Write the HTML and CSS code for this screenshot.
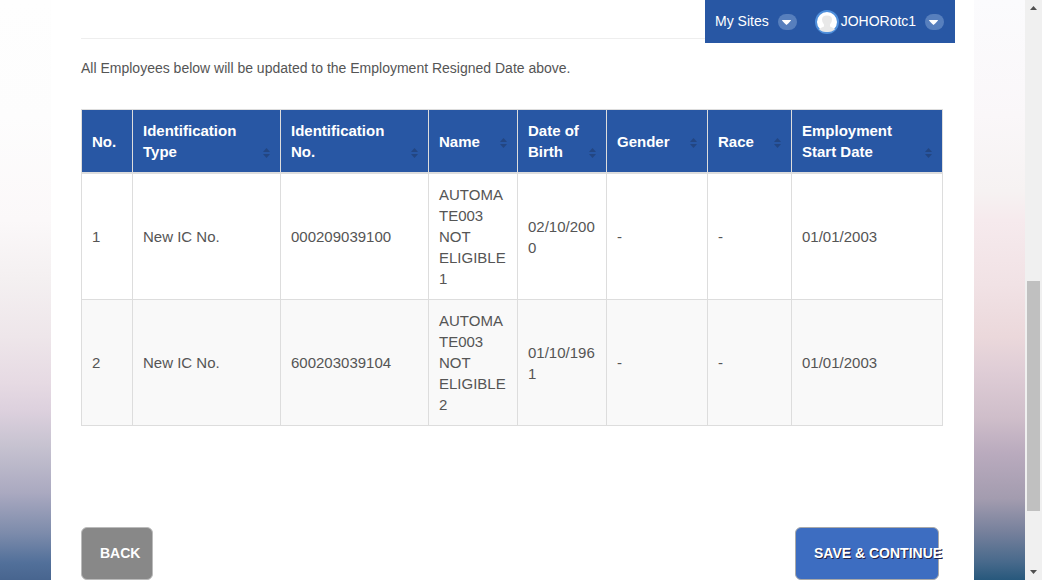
FILE: index.html
```html
<!DOCTYPE html>
<html lang="en">
<head>
<meta charset="utf-8">
<title>Employment Resigned Date</title>
<meta name="viewport" content="width=device-width, initial-scale=1">
<link rel="stylesheet" href="styles.css">
</head>
<body>
<svg class="symbols">
  <symbol id="sort" viewBox="0 0 7 10"><path d="M0 4h7L3.500 0zM0 6h7L3.500 10z"/></symbol>
  <symbol id="chevron" viewBox="0 0 19 16"><rect width="19" height="16" rx="8" fill="#577fbd"/><path d="M4 6h9q0 1-4.500 5Q4 7 4 6z" fill="#fff"/></symbol>
</svg>
<div class="page">
  <div class="backdrop backdrop-left"></div>
  <main class="panel">
    <nav class="topbar" aria-label="Account">
      <button class="menu" type="button">My Sites <svg class="chevron"><use href="#chevron"/></svg></button>
      <button class="menu" type="button">
        <svg class="avatar" viewBox="0 0 24 24"><circle cx="12" cy="12" r="11" fill="#fff" stroke="#4f8fdb" stroke-width="2"/><path d="M4 19.500q2-2 5-3v-2q-2-2-2-5 0-4 5-4t5 4q0 3-2 5v2q3 1 5 3-3 2.500-8 2.500t-8-2.500z" fill="#e8e8e8"/></svg>
        <span class="user">JOHORotc1</span> <svg class="chevron"><use href="#chevron"/></svg>
      </button>
    </nav>
    <hr class="rule">
    <p class="note">All Employees below will be updated to the Employment Resigned Date above.</p>
    <table class="employees">
      <colgroup>
        <col class="col-no"><col class="col-id"><col class="col-id"><col class="col-name"><col class="col-name"><col class="col-gender"><col class="col-race"><col class="col-start">
      </colgroup>
      <thead>
        <tr>
          <th scope="col">No.</th>
          <th scope="col"><button class="sorter" type="button">Identification Type<svg class="sort"><use href="#sort"/></svg></button></th>
          <th scope="col"><button class="sorter" type="button">Identification No.<svg class="sort"><use href="#sort"/></svg></button></th>
          <th scope="col"><button class="sorter" type="button">Name<svg class="sort"><use href="#sort"/></svg></button></th>
          <th scope="col"><button class="sorter" type="button">Date of Birth<svg class="sort"><use href="#sort"/></svg></button></th>
          <th scope="col"><button class="sorter" type="button">Gender<svg class="sort"><use href="#sort"/></svg></button></th>
          <th scope="col"><button class="sorter" type="button">Race<svg class="sort"><use href="#sort"/></svg></button></th>
          <th scope="col"><button class="sorter" type="button">Employment Start Date<svg class="sort"><use href="#sort"/></svg></button></th>
        </tr>
      </thead>
      <tbody>
        <tr><td>1</td><td>New IC No.</td><td>000209039100</td><td>AUTOMATE003 NOT ELIGIBLE 1</td><td>02/10/2000</td><td>-</td><td>-</td><td>01/01/2003</td></tr>
        <tr><td>2</td><td>New IC No.</td><td>600203039104</td><td>AUTOMATE003 NOT ELIGIBLE 2</td><td>01/10/1961</td><td>-</td><td>-</td><td>01/01/2003</td></tr>
      </tbody>
    </table>
    <div class="actions">
      <button class="btn btn-back" type="button">BACK</button>
      <button class="btn btn-save" type="button">SAVE &amp; CONTINUE</button>
    </div>
  </main>
  <div class="backdrop backdrop-right"></div>
  <div class="scrollbar" aria-hidden="true">
    <svg class="arrow" viewBox="0 0 7 4"><path d="M0 4h7L3.500 0z"/></svg>
    <div class="track"><div class="thumb"></div></div>
    <svg class="arrow" viewBox="0 0 7 4"><path d="M0 0h7L3.500 4z"/></svg>
  </div>
</div>
</body>
</html>
```

FILE: styles.css
```css
* { box-sizing: border-box; }
body {
  margin: 0;
  background: #fff;
  color: #555;
  font: 15px/21px "Liberation Sans", Arial, sans-serif;
}
button { font: inherit; color: inherit; cursor: pointer; }
.symbols { display: none; }
.page {
  display: grid;
  grid-template-columns: 51px minmax(0, 1fr) 51px 17px;
  min-height: 100vh;
}
.backdrop-left {
  background: linear-gradient(#fefefe 0%, #fdfdfd 20%, #fbf8f9 38%, #f4f0f1 48%, #eee6ea 58%, #e6dae3 66%, #dcd0dd 71%, #c6c2d0 77%, #aaa9c0 85%, #7c8bab 92%, #52709a 97%, #48658f 100%);
}
.backdrop-right {
  background: linear-gradient(#fbfbfd 0%, #faf7f9 20%, #f6f2f2 33%, #f6eaed 38%, #f1e2e5 49%, #ebd8db 58%, #dfcdd6 64%, #cfbeca 72%, #baabbe 78%, #a39caf 86%, #747f9b 92%, #47698b 97%, #27587c 100%);
}
.panel {
  position: relative;
  padding: 38px 31px 0 30px;
}
.topbar {
  position: absolute;
  top: 0;
  right: 19px;
  display: flex;
  gap: 18px;
  width: 250px;
  height: 43px;
  padding: 0 10px;
  background: #2857a4;
  color: #fff;
  font-size: 14px;
}
.menu {
  display: flex;
  align-items: center;
  gap: 9px;
  padding: 0;
  border: 0;
  background: none;
  white-space: nowrap;
}
.chevron { width: 19px; height: 16px; }
.avatar { width: 24px; height: 24px; margin-right: -7px; }
.rule { margin: 0; border: 0; border-top: 1px solid #eee; }
.note { margin: 19px 0 30px; font-size: 14px; }
.employees {
  width: 100%;
  table-layout: fixed;
  border-collapse: collapse;
  border: 1px solid #ddd;
}
.col-no { width: 51px; }
.col-id { width: 148px; }
.col-name { width: 89px; }
.col-gender { width: 101px; }
.col-race { width: 84px; }
.col-start { width: 151px; }
.employees th, .employees td {
  padding: 10px;
  border: 1px solid #ddd;
  text-align: left;
  vertical-align: middle;
  overflow-wrap: anywhere;
}
.employees th {
  border-bottom-width: 2px;
  background: #2857a4;
  color: #fff;
}
.employees tbody tr:nth-child(even) { background: #f9f9f9; }
.sorter {
  display: flex;
  align-items: flex-end;
  justify-content: space-between;
  gap: 8px;
  width: 100%;
  padding: 0;
  border: 0;
  background: none;
  text-align: left;
}
.sort { flex: none; width: 7px; height: 10px; margin-bottom: 4px; fill: #234682; }
.actions {
  display: flex;
  justify-content: space-between;
  padding: 101px 4px 0 0;
}
.btn {
  height: 53px;
  padding: 0 18px;
  border: 1px solid #bbb;
  border-radius: 6px;
  color: #fff;
  font-size: 14px;
  font-weight: bold;
  text-align: left;
  white-space: nowrap;
}
.btn-back { width: 72px; background: #888; }
.btn-save {
  width: 144px;
  background: #3d6dc1;
  border-color: #a9a9a9;
  text-shadow: 1px 1px 0 #224;
}
.scrollbar {
  display: flex;
  flex-direction: column;
  align-items: center;
  padding: 6px 2px;
  background: #f0f0f0;
}
.arrow { width: 7px; height: 4px; fill: #505050; }
.track { flex: 1; width: 100%; padding: 271px 0 59px; }
.thumb { width: 13px; height: 100%; background: #c0c0c0; }
```
